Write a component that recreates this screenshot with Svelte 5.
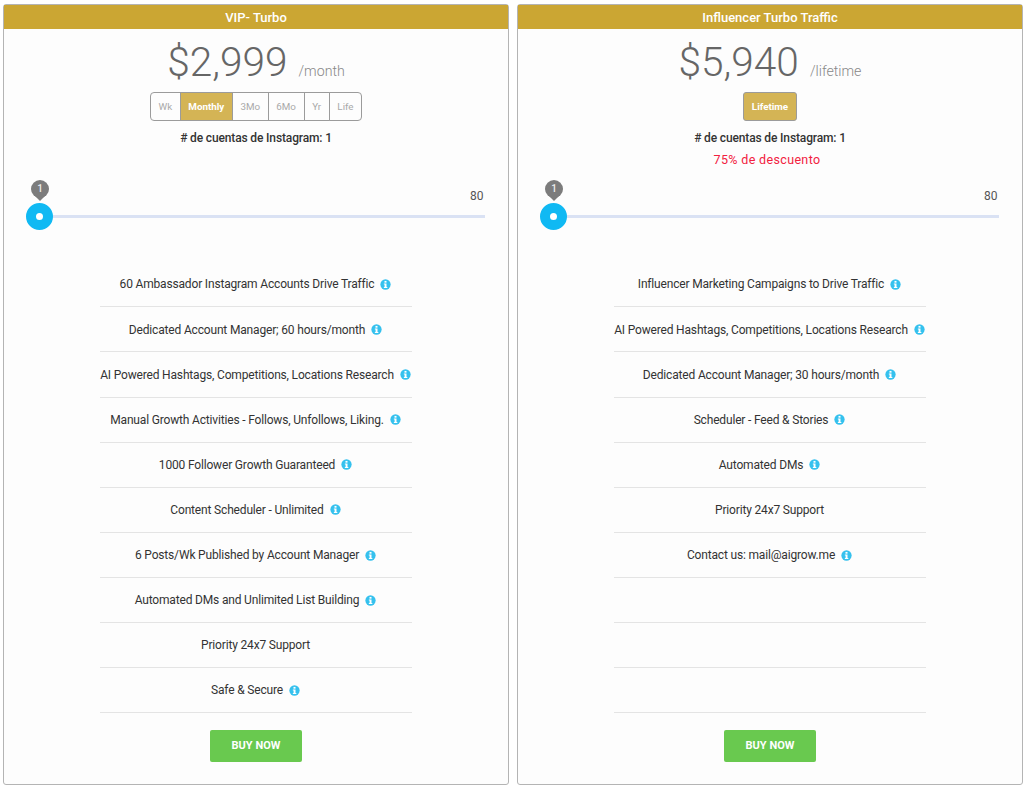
<script>
  const plans = [
    {
      title: 'VIP- Turbo', price: '$2,999', per: '/month',
      periods: [['Wk', false], ['Monthly', true], ['3Mo', false], ['6Mo', false], ['Yr', false], ['Life', false]],
      discount: '',
      features: [
        ['60 Ambassador Instagram Accounts Drive Traffic', true],
        ['Dedicated Account Manager; 60 hours/month', true],
        ['AI Powered Hashtags, Competitions, Locations Research', true],
        ['Manual Growth Activities - Follows, Unfollows, Liking.', true],
        ['1000 Follower Growth Guaranteed', true],
        ['Content Scheduler - Unlimited', true],
        ['6 Posts/Wk Published by Account Manager', true],
        ['Automated DMs and Unlimited List Building', true],
        ['Priority 24x7 Support', false],
        ['Safe & Secure', true]
      ]
    },
    {
      title: 'Influencer Turbo Traffic', price: '$5,940', per: '/lifetime',
      periods: [['Lifetime', true]],
      discount: '75% de descuento',
      features: [
        ['Influencer Marketing Campaigns to Drive Traffic', true],
        ['AI Powered Hashtags, Competitions, Locations Research', true],
        ['Dedicated Account Manager; 30 hours/month', true],
        ['Scheduler - Feed & Stories', true],
        ['Automated DMs', true],
        ['Priority 24x7 Support', false],
        ['Contact us: mail@aigrow.me', true],
        ['', false], ['', false], ['', false]
      ]
    }
  ];
</script>

<div class="page">
  {#each plans as p}
    <section class="card">
      <h2 class="head">{p.title}</h2>
      <div class="price"><span class="amount">{p.price}</span><span class="per">{p.per}</span></div>
      <div class="periods">
        {#each p.periods as [label, on]}
          <span class="period" class:on>{label}</span>
        {/each}
      </div>
      <div class="accounts"># de cuentas de Instagram: 1</div>
      <div class="discount">{p.discount}</div>
      <div class="slider">
        <span class="max">80</span>
        <div class="track"></div>
        <span class="pin">1</span>
        <span class="handle"></span>
      </div>
      <ul class="features">
        {#each p.features as [text, info]}
          <li>
            <span>{text}</span>
            {#if info}
              <svg class="info" viewBox="0 0 12 12" width="11" height="11" aria-hidden="true">
                <circle cx="6" cy="6" r="5.6" fill="#35c1ee" />
                <rect x="4.9" y="2.1" width="2.2" height="1.9" fill="#fff" />
                <path d="M4.2 4.9H7.1V8.6H8V9.8H4.2V8.6H5V6.1H4.2Z" fill="#fff" />
              </svg>
            {/if}
          </li>
        {/each}
      </ul>
      <button class="buy">BUY NOW</button>
    </section>
  {/each}
</div>

<style>
  :global(body) {
    margin: 0;
    background: #fff;
    font-family: Roboto, "Liberation Sans", sans-serif;
  }
  .page {
    display: flex;
    gap: 8px;
    padding: 4px 0 0 3px;
    width: 1026px;
    box-sizing: border-box;
  }
  .card {
    width: 506px;
    height: 781px;
    box-sizing: border-box;
    border: 1px solid #b4b4b4;
    border-radius: 3px;
    background: #fdfdfd;
    display: flex;
    flex-direction: column;
    align-items: center;
  }
  .head {
    align-self: stretch;
    margin: 0;
    height: 24px;
    background: #cba633;
    color: #fff;
    font-size: 13px;
    font-weight: 500;
    line-height: 25px;
    text-align: center;
  }
  .price {
    height: 63px;
    display: flex;
    align-items: baseline;
    justify-content: center;
    line-height: 67px;
    color: #666;
  }
  .amount {
    font-size: 40.6px;
    font-weight: 300;
  }
  .per {
    margin-left: 11px;
    font-size: 14.2px;
    font-weight: 300;
    color: #888;
  }
  .periods {
    height: 29px;
    display: flex;
  }
  .period {
    box-sizing: border-box;
    border: 1px solid #9b9b9b;
    margin-left: -1px;
    padding: 0 7.6px;
    font-size: 9.8px;
    line-height: 27px;
    color: #a9a9a9;
    background: #fdfdfd;
  }
  .period:first-child {
    border-radius: 4px 0 0 4px;
    margin-left: 0;
  }
  .period:last-child {
    border-radius: 0 4px 4px 0;
  }
  .period:only-child {
    border-radius: 3px;
    padding: 0 7.7px;
  }
  .period.on {
    background: #d4b455;
    color: #fff;
    font-weight: 700;
  }
  .accounts {
    margin-top: 9px;
    font-size: 12px;
    letter-spacing: -0.14px;
    font-weight: 500;
    line-height: 16px;
    color: #333;
  }
  .discount {
    margin-top: 6px;
    margin-right: 6px;
    height: 16px;
    font-size: 12.5px;
    line-height: 16px;
    letter-spacing: 0.35px;
    color: #f2213f;
  }
  .slider {
    position: relative;
    align-self: stretch;
    height: 94.19px;
    flex: none;
  }
  .track {
    position: absolute;
    left: 36px;
    right: 23px;
    top: 47px;
    height: 3px;
    background: #dae2f4;
  }
  .max {
    position: absolute;
    right: 24.5px;
    top: 21px;
    font-size: 12px;
    line-height: 14px;
    color: #555;
  }
  .handle {
    position: absolute;
    left: 22.4px;
    top: 35px;
    width: 27px;
    height: 27px;
    box-sizing: border-box;
    border: 10px solid #10b9f3;
    border-radius: 50%;
    background: #fff;
  }
  .pin {
    position: absolute;
    left: 27px;
    top: 12px;
    width: 18px;
    height: 18px;
    border-radius: 50%;
    background: #7c7c7c;
    color: #eee;
    font-size: 10px;
    font-weight: 500;
    line-height: 17px;
    text-align: center;
  }
  .pin::after {
    content: "";
    position: absolute;
    left: 4px;
    bottom: -3px;
    border-left: 5px solid transparent;
    border-right: 5px solid transparent;
    border-top: 5px solid #7c7c7c;
  }
  .features {
    list-style: none;
    margin: 0;
    padding: 0;
    width: 312px;
    flex: none;
  }
  .features li {
    box-sizing: border-box;
    height: 45.11px;
    padding: 0.3px 1px 0 0;
    border-bottom: 1px solid #e4e4e4;
    display: flex;
    align-items: center;
    justify-content: center;
    gap: 6px;
    font-size: 12px;
    letter-spacing: -0.17px;
    color: #333;
    white-space: nowrap;
  }
  .info {
    flex: none;
  }
  .buy {
    margin-top: 16.7px;
    width: 92px;
    height: 32px;
    border: 0;
    border-radius: 2px;
    background: #69c94f;
    color: #fff;
    font-family: inherit;
    font-size: 11px;
    font-weight: 700;
    padding: 0 0 1px;
  }
</style>
